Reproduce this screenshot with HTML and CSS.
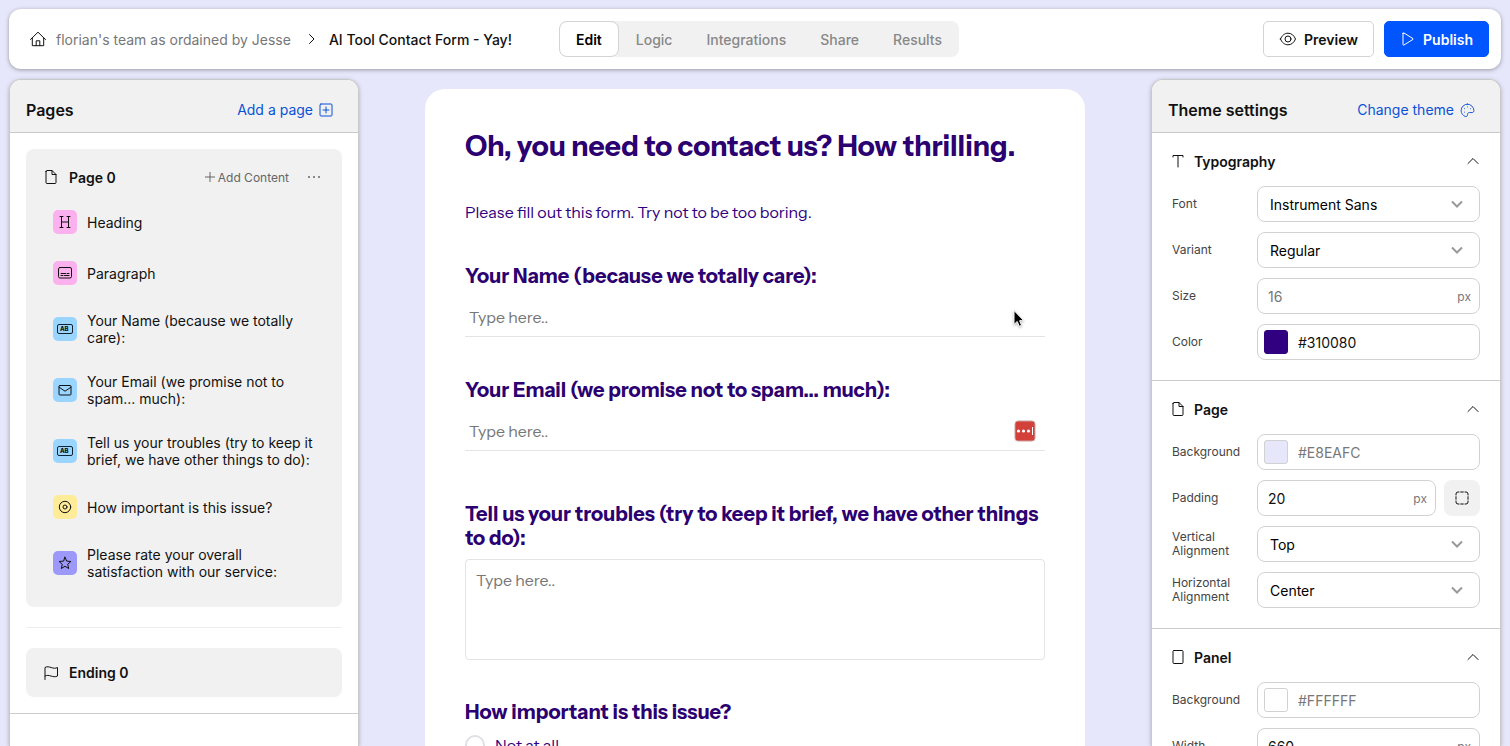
FILE: index.html
```html
<!DOCTYPE html>
<html lang="en">
<head>
    <meta charset="UTF-8">
    <meta name="viewport" content="width=device-width, initial-scale=1.0">
    <title>AI Tool Contact Form - Yay!</title>
    <link rel="stylesheet" href="styles.css">
</head>
<body>

<header class="topbar">
    <nav class="breadcrumb">
        <a href="#" class="home" aria-label="Home">
            <svg class="icon" width="18" height="18" viewBox="0 0 18 18"><path d="M1.500 9.500 9 2.200l7.500 7.300M3.300 8v7.700h11.400V8M7.200 15.700v-4.900h3.600v4.900"/></svg>
        </a>
        <a href="#" class="team">florian's team as ordained by Jesse</a>
        <svg class="icon" width="8" height="12" viewBox="0 0 8 12"><path d="m1.500 1.500 4.500 4.500-4.500 4.500"/></svg>
        <span class="form-name">AI Tool Contact Form - Yay!</span>
    </nav>
    <nav class="tabs">
        <button class="tab active">Edit</button>
        <button class="tab">Logic</button>
        <button class="tab">Integrations</button>
        <button class="tab">Share</button>
        <button class="tab">Results</button>
    </nav>
    <div class="actions">
        <button class="btn">
            <svg class="icon" width="18" height="18" viewBox="0 0 18 18"><path d="M1.500 9C3 5.300 5.700 3.200 9 3.200S15 5.300 16.500 9C15 12.700 12.300 14.800 9 14.800S3 12.700 1.500 9z"/><circle cx="9" cy="9" r="3"/></svg>
            Preview
        </button>
        <button class="btn btn-primary">
            <svg class="icon" width="16" height="16" viewBox="0 0 16 16"><path d="M3 2.300v11.400a.5.5 0 0 0 .8.4l9.200-5.700a.5.5 0 0 0 0-.8L3.800 1.900a.5.5 0 0 0-.8.4z"/></svg>
            Publish
        </button>
    </div>
</header>

<div class="workspace">
    <aside class="panel">
        <div class="panel-header">
            <h2>Pages</h2>
            <a href="#" class="panel-link">Add a page
                <svg class="icon" width="14" height="14" viewBox="0 0 14 14"><rect x="1" y="1" width="12" height="12" rx="1"/><path d="M7 4v6M4 7h6"/></svg>
            </a>
        </div>
        <div class="pages">
            <div class="page-box">
                <div class="page-head">
                    <svg class="icon" width="14" height="16" viewBox="0 0 14 16"><path d="M2 2.500v11a1 1 0 0 0 1 1h8a1 1 0 0 0 1-1V5.500l-4-4H3a1 1 0 0 0-1 1zM8 1.500v4h4"/></svg>
                    <h3>Page 0</h3>
                    <button class="add-content">
                        <svg class="icon" width="10" height="10" viewBox="0 0 10 10"><path d="M5 0v10M0 5h10"/></svg>
                        Add Content
                    </button>
                    <button class="more" aria-label="More">
                        <svg width="12" height="4" viewBox="0 0 12 4"><circle cx="1" cy="2" r="1"/><circle cx="6" cy="2" r="1"/><circle cx="11" cy="2" r="1"/></svg>
                    </button>
                </div>
                <ul class="items">
                    <li>
                        <span class="badge pink"><svg class="icon" width="14" height="14" viewBox="0 0 14 14"><path d="M3.500 1.500v11M10.500 1.500v11M3.500 7h7M2 1.500h3M9 1.500h3M2 12.500h3M9 12.500h3"/></svg></span>
                        Heading
                    </li>
                    <li>
                        <span class="badge pink"><svg class="icon" width="16" height="14" viewBox="0 0 16 14"><rect x="1.500" y="1.500" width="13" height="10.500" rx="1.500"/><path d="M4 7.500h4.500M10 7.500h2M4 9.500h2M7.500 9.500H12"/></svg></span>
                        Paragraph
                    </li>
                    <li>
                        <span class="badge blue"><span class="ab">AB</span></span>
                        Your Name (because we totally care):
                    </li>
                    <li>
                        <span class="badge blue"><svg class="icon" width="14" height="14" viewBox="0 0 14 14"><rect x="1" y="2.500" width="12" height="9.500" rx="1"/><path d="m1 4.200 6 4 6-4"/></svg></span>
                        Your Email (we promise not to spam... much):
                    </li>
                    <li>
                        <span class="badge blue"><span class="ab">AB</span></span>
                        Tell us your troubles (try to keep it brief, we have other things to do):
                    </li>
                    <li>
                        <span class="badge yellow"><svg class="icon" width="14" height="14" viewBox="0 0 14 14"><circle cx="7" cy="7" r="5.700"/><circle cx="7" cy="7" r="2"/></svg></span>
                        How important is this issue?
                    </li>
                    <li>
                        <span class="badge violet"><svg class="icon" width="14" height="14" viewBox="0 0 14 14"><path d="m7 1.200 1.700 3.900 4.200.4-3.200 2.800 1 4.200L7 10.300l-3.700 2.200 1-4.200L1.100 5.500l4.200-.4z"/></svg></span>
                        Please rate your overall satisfaction with our service:
                    </li>
                </ul>
            </div>
            <hr>
            <div class="page-box ending">
                <svg class="icon" width="14" height="16" viewBox="0 0 14 16"><path d="M1 14.500v-12c4-2.500 8 2.500 12.500 0v8.500c-4.500 2.500-8.500-2.500-12.500 0"/></svg>
                <h3>Ending 0</h3>
            </div>
        </div>
    </aside>

    <main class="canvas">
        <form class="form-card">
            <h1>Oh, you need to contact us? How thrilling.</h1>
            <p>Please fill out this form. Try not to be too boring.</p>

            <div class="field">
                <label for="name">Your Name (because we totally care):</label>
                <input type="text" id="name" placeholder="Type here..">
                <svg class="cursor" width="14" height="20" viewBox="0 0 14 20"><path d="M2 1.500v14l3.200-3 2.100 4.800 2.300-1-2-4.600h4.200z"/></svg>
            </div>

            <div class="field">
                <label for="email">Your Email (we promise not to spam... much):</label>
                <input type="email" id="email" placeholder="Type here..">
                <svg class="autofill" width="22" height="22" viewBox="0 0 22 22"><rect x="1" y="1" width="20" height="20" rx="3"/><circle cx="4.500" cy="11" r="1.600"/><circle cx="9.500" cy="11" r="1.600"/><circle cx="14.500" cy="11" r="1.600"/><path d="M18.500 7v8"/></svg>
            </div>

            <div class="field field-long">
                <label for="troubles">Tell us your troubles (try to keep it brief, we have other things to do):</label>
                <textarea id="troubles" placeholder="Type here.."></textarea>
            </div>

            <fieldset class="field">
                <legend>How important is this issue?</legend>
                <div class="choice">
                    <input type="radio" name="importance" id="importance-0">
                    <label for="importance-0">Not at all</label>
                </div>
            </fieldset>
        </form>
    </main>

    <aside class="panel">
        <div class="panel-header">
            <h2>Theme settings</h2>
            <a href="#" class="panel-link">Change theme
                <svg class="icon" width="15" height="15" viewBox="0 0 16 16"><path d="M8 1.200A6.800 6.800 0 0 0 1.200 8c0 3 2 5.500 4.500 6.400 1.300.4 2.300-.5 2.300-1.700v-.6c0-1.200.8-1.900 1.900-1.900h2.900c1.200 0 2-.8 2-2A6.900 6.900 0 0 0 8 1.200z"/><path class="dots" d="M8 4.200h.01M4.700 6h.01M4.700 9.800h.01M11.300 6h.01"/></svg>
            </a>
        </div>

        <section class="settings">
            <button class="settings-head">
                <svg class="icon" width="12" height="14" viewBox="0 0 12 14"><path d="M1 3V1.500h10V3M6 1.500v11.500"/></svg>
                <span>Typography</span>
                <svg class="icon" width="14" height="14" viewBox="0 0 14 14"><path d="m2 9.500 5-5 5 5"/></svg>
            </button>
            <div class="row">
                <label for="font">Font</label>
                <div class="select">
                    <select id="font"><option>Instrument Sans</option></select>
                    <svg class="caret" width="12" height="8" viewBox="0 0 12 8"><path d="m1 1.500 5 5 5-5"/></svg>
                </div>
            </div>
            <div class="row">
                <label for="variant">Variant</label>
                <div class="select">
                    <select id="variant"><option>Regular</option></select>
                    <svg class="caret" width="12" height="8" viewBox="0 0 12 8"><path d="m1 1.500 5 5 5-5"/></svg>
                </div>
            </div>
            <div class="row">
                <label for="size">Size</label>
                <div class="control"><input type="text" id="size" placeholder="16"><span class="unit">px</span></div>
            </div>
            <div class="row">
                <label for="color">Color</label>
                <div class="control"><span class="swatch swatch-text"></span><input type="text" id="color" value="#310080"></div>
            </div>
        </section>

        <section class="settings">
            <button class="settings-head">
                <svg class="icon" width="12" height="16" viewBox="0 0 12 16"><path d="M1 2.500v11a1 1 0 0 0 1 1h8a1 1 0 0 0 1-1V5.500l-4-4H2a1 1 0 0 0-1 1zM7 1.500v4h4"/></svg>
                <span>Page</span>
                <svg class="icon" width="14" height="14" viewBox="0 0 14 14"><path d="m2 9.500 5-5 5 5"/></svg>
            </button>
            <div class="row">
                <label for="page-bg">Background</label>
                <div class="control"><span class="swatch swatch-page"></span><input type="text" id="page-bg" placeholder="#E8EAFC"></div>
            </div>
            <div class="row">
                <label for="padding">Padding</label>
                <div class="split">
                    <div class="control"><input type="text" id="padding" value="20"><span class="unit">px</span></div>
                    <button class="sides" aria-label="Each side">
                        <svg class="icon" width="14" height="14" viewBox="0 0 14 14"><path d="M1 4V3a2 2 0 0 1 2-2h1M10 1h1a2 2 0 0 1 2 2v1M13 10v1a2 2 0 0 1-2 2h-1M4 13H3a2 2 0 0 1-2-2v-1M5.700 1h2.600M5.700 13h2.600M1 5.700v2.600M13 5.700v2.600"/></svg>
                    </button>
                </div>
            </div>
            <div class="row">
                <label for="valign">Vertical Alignment</label>
                <div class="select">
                    <select id="valign"><option>Top</option></select>
                    <svg class="caret" width="12" height="8" viewBox="0 0 12 8"><path d="m1 1.500 5 5 5-5"/></svg>
                </div>
            </div>
            <div class="row">
                <label for="halign">Horizontal Alignment</label>
                <div class="select">
                    <select id="halign"><option>Center</option></select>
                    <svg class="caret" width="12" height="8" viewBox="0 0 12 8"><path d="m1 1.500 5 5 5-5"/></svg>
                </div>
            </div>
        </section>

        <section class="settings">
            <button class="settings-head">
                <svg class="icon" width="12" height="16" viewBox="0 0 12 16"><rect x="1" y="1.500" width="10" height="13" rx="1"/></svg>
                <span>Panel</span>
                <svg class="icon" width="14" height="14" viewBox="0 0 14 14"><path d="m2 9.500 5-5 5 5"/></svg>
            </button>
            <div class="row">
                <label for="panel-bg">Background</label>
                <div class="control"><span class="swatch"></span><input type="text" id="panel-bg" placeholder="#FFFFFF"></div>
            </div>
            <div class="row">
                <label for="width">Width</label>
                <div class="control"><input type="text" id="width" value="660"><span class="unit">px</span></div>
            </div>
        </section>
    </aside>
</div>

</body>
</html>
```
FILE: styles.css
```css
* {
    box-sizing: border-box;
}

body {
    font-family: Inter, "Liberation Sans", sans-serif;
    font-size: 14px;
    color: #111;
    background-color: #e6e7fa;
    margin: 0;
    padding: 9px 9px 0;
    height: 100vh;
    overflow: hidden;
    display: flex;
    flex-direction: column;
    gap: 10px;
}

h1, h2, h3, p, ul {
    margin: 0;
    padding: 0;
}

a {
    color: inherit;
    text-decoration: none;
}

button, input, select, textarea {
    font: inherit;
    color: inherit;
    margin: 0;
}

button {
    background: none;
    border: none;
    padding: 0;
    cursor: pointer;
}

svg {
    display: block;
    flex: none;
}

.icon {
    fill: none;
    stroke: currentColor;
    stroke-width: 1;
    stroke-linejoin: round;
    stroke-linecap: round;
}

/* top bar */

.topbar {
    display: grid;
    grid-template-columns: 1fr auto 1fr;
    align-items: center;
    flex: none;
    padding: 12px 12px 12px 20px;
    background-color: white;
    border-radius: 12px;
    box-shadow: 0 1px 4px rgba(0, 0, 0, 0.35);
}

.breadcrumb {
    display: flex;
    align-items: center;
    white-space: nowrap;
}

.team {
    color: #777;
    margin: 0 17px 0 9px;
}

.form-name {
    font-weight: 500;
    margin-left: 13px;
}

.tabs {
    display: flex;
    background-color: #f1f1f1;
    border-radius: 8px;
}

.tab {
    height: 36px;
    padding: 0 16px;
    border: 1px solid transparent;
    border-radius: 8px;
    color: #888;
    font-weight: 500;
}

.tab.active {
    background-color: white;
    border-color: #d4d4d4;
    color: #000;
    font-weight: 600;
}

.actions {
    display: flex;
    justify-content: flex-end;
    gap: 10px;
}

.btn {
    display: flex;
    align-items: center;
    gap: 7px;
    height: 36px;
    padding: 0 15px;
    border: 1px solid #d4d4d4;
    border-radius: 5px;
    font-weight: 600;
}

.btn-primary {
    background-color: #0055ff;
    border-color: #0055ff;
    color: white;
}

/* workspace */

.workspace {
    flex: 1;
    min-height: 0;
    display: grid;
    grid-template-columns: 350px 1fr 350px;
}

.panel {
    background-color: white;
    border: 1px solid #c9c9c9;
    border-bottom: none;
    border-radius: 12px 12px 0 0;
    box-shadow: 0 1px 4px rgba(0, 0, 0, 0.25);
    overflow: hidden;
}

.panel-header {
    display: flex;
    justify-content: space-between;
    align-items: center;
    padding: 20px 25px 12px 16px;
    border-bottom: 1px solid #c9c9c9;
    background-color: #f1f1f1;
    line-height: 20px;
}

.panel-header h2 {
    font-size: 16px;
    font-weight: 600;
}

.panel-link {
    display: flex;
    align-items: center;
    gap: 6px;
    color: #0a51d8;
}

/* pages */

.pages {
    padding: 16px;
    border-bottom: 1px solid #ccc;
}

.pages hr {
    margin: 20px 0;
    border: none;
    border-top: 1px solid #eee;
}

.page-box {
    padding: 16px 18px 27px;
    background-color: #f1f1f1;
    border-radius: 8px;
}

.page-box h3 {
    font-size: 14px;
    font-weight: 600;
}

.page-head {
    display: flex;
    align-items: center;
    height: 24px;
}

.page-head h3 {
    flex: 1;
    margin-left: 11px;
}

.add-content {
    display: flex;
    align-items: center;
    gap: 3px;
    color: #666;
    font-size: 12px;
}

.more {
    margin: 0 4px 0 19px;
    fill: #666;
}

.items {
    display: flex;
    flex-direction: column;
    gap: 27px;
    margin: 21px 8px 0 9px;
    list-style: none;
}

.items li {
    display: flex;
    align-items: center;
    gap: 10px;
    line-height: 17px;
}

.badge {
    display: flex;
    flex: none;
    align-items: center;
    justify-content: center;
    width: 24px;
    height: 24px;
    border-radius: 5px;
}

.pink {
    background-color: #fbb1ee;
}

.blue {
    background-color: #99d5ff;
}

.yellow {
    background-color: #feec99;
}

.violet {
    background-color: #9c99fb;
}

.ab {
    width: 16px;
    height: 10px;
    padding-left: 2px;
    border: 1px solid #123;
    border-radius: 2px;
    font-size: 6px;
    font-weight: 800;
    line-height: 8px;
}

.ending {
    display: flex;
    align-items: center;
    gap: 11px;
    padding: 16px 18px;
    line-height: 17px;
}

/* form */

.canvas {
    display: flex;
    justify-content: center;
    padding: 10px 20px 0;
    overflow: hidden;
}

.form-card {
    width: 100%;
    max-width: 660px;
    height: max-content;
    padding: 39px 40px 40px;
    background-color: white;
    border-radius: 20px;
    color: #310080;
    font-family: "Instrument Sans", "Liberation Sans", sans-serif;
    font-size: 16px;
    line-height: 24px;
}

.form-card h1 {
    margin-bottom: 36px;
    font-size: 28px;
    line-height: 36px;
    color: #2b0070;
}

.field {
    position: relative;
    margin: 41px 0 0;
    padding: 0;
    border: none;
}

.field:first-of-type {
    margin-top: 40px;
}

.field-long {
    margin-top: 51px;
}

.field > label, .field legend {
    display: block;
    margin-bottom: 9px;
    padding: 0;
    font-size: 20px;
    font-weight: 700;
    color: #2b0070;
}

.field > input, .field textarea {
    display: block;
    width: 100%;
    border: 1px solid #e3e3e8;
    background: none;
}

.field > input {
    height: 40px;
    padding: 0 4px;
    border-width: 0 0 1px;
}

.field textarea {
    height: 101px;
    padding: 8px 10px;
    border-radius: 4px;
    resize: none;
}

::placeholder {
    color: #777;
    opacity: 1;
}

.choice {
    display: flex;
    align-items: center;
    gap: 10px;
}

.choice input {
    appearance: none;
    width: 20px;
    height: 20px;
    border: 2px solid #e0e0e6;
    border-radius: 50%;
}

.autofill {
    position: absolute;
    right: 9px;
    bottom: 9px;
    fill: white;
    stroke: white;
    stroke-width: 1;
}

.autofill rect {
    fill: #d3403a;
    stroke: #c9a09e;
}

.autofill circle {
    stroke: none;
}

.cursor {
    position: absolute;
    right: 19px;
    bottom: 8px;
    stroke: white;
    stroke-width: 1;
    filter: drop-shadow(0 1px 1px rgba(0, 0, 0, 0.3));
}

/* theme settings */

.settings {
    display: flex;
    flex-direction: column;
    gap: 10px;
    padding: 18px 20px 20px;
    border-bottom: 1px solid #ccc;
}

.settings-head {
    display: flex;
    align-items: center;
    height: 20px;
    margin-bottom: 5px;
    font-weight: 600;
}

.settings-head span {
    flex: 1;
    margin-left: 10px;
    text-align: left;
}

.row {
    display: grid;
    grid-template-columns: 85px minmax(0, 1fr);
    align-items: center;
}

.row label {
    color: #444;
    font-size: 12px;
    line-height: 14px;
}

.control, .select select {
    height: 36px;
    border: 1px solid #d2d2d2;
    border-radius: 8px;
    background-color: white;
}

.control {
    display: flex;
    align-items: center;
    padding: 0 8px 0 6px;
}

.control input {
    flex: 1;
    min-width: 0;
    padding: 0 4px;
    border: none;
    background: none;
}

.unit {
    color: #777;
    font-size: 12px;
}

.select {
    display: grid;
    align-items: center;
}

.select select, .caret {
    grid-area: 1 / 1;
}

.select select {
    appearance: none;
    width: 100%;
    padding: 0 12px;
    color: #000;
}

.caret {
    justify-self: end;
    margin-right: 17px;
    fill: none;
    stroke: #999;
    stroke-width: 2;
    pointer-events: none;
}

.split {
    display: grid;
    grid-template-columns: minmax(0, 1fr) 36px;
    gap: 8px;
}

.sides {
    display: flex;
    align-items: center;
    justify-content: center;
    background-color: #f1f1f1;
    border-radius: 8px;
}

.swatch {
    flex: none;
    width: 24px;
    height: 24px;
    margin-right: 6px;
    border: 1px solid #d2d2d2;
    border-radius: 3px;
}

.swatch-text {
    background-color: #310080;
    border-color: #310080;
}

.swatch-page {
    background-color: #e6e7fa;
}
```
